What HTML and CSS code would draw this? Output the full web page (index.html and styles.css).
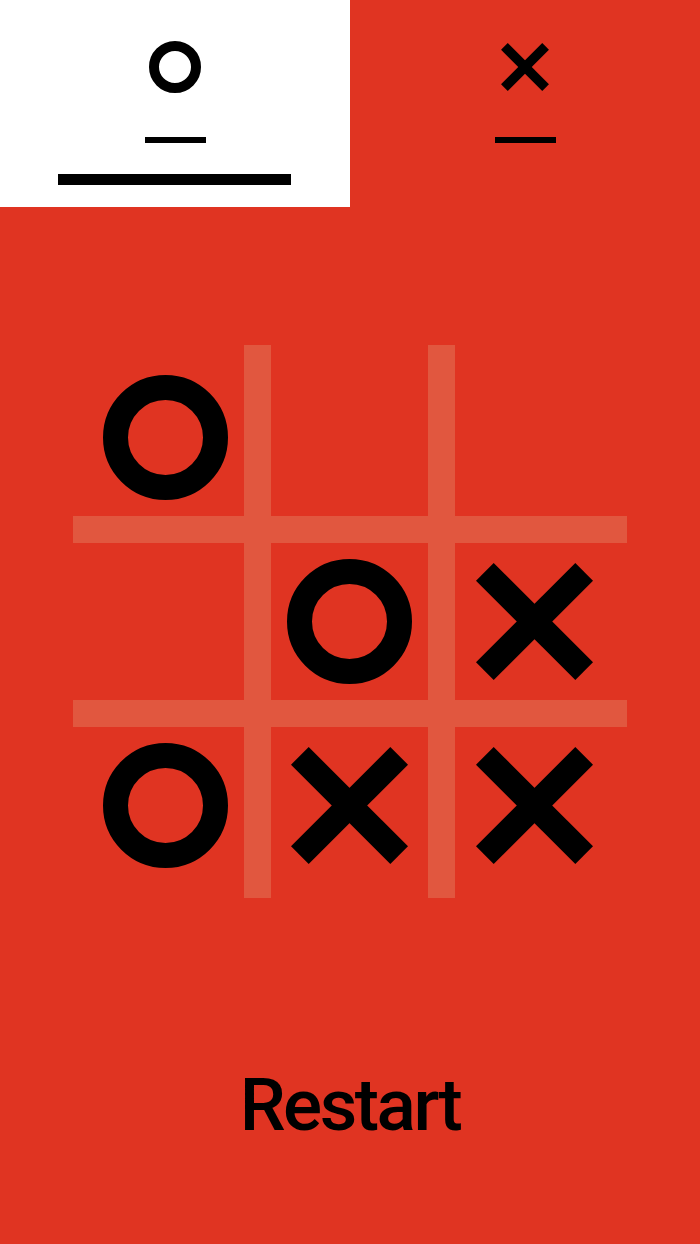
FILE: index.html
```html
<!DOCTYPE html>
<html lang="en">
<head>
<meta charset="utf-8">
<title>Tic Tac Toe</title>
<link rel="stylesheet" href="styles.css">
</head>
<body>
  <header class="players">
    <div class="player player-active">
      <svg class="player-mark" viewBox="0 0 52 52" width="52" height="52">
        <circle cx="26" cy="26" r="21" fill="none" stroke="#000" stroke-width="10"/>
      </svg>
      <div class="player-score"></div>
      <div class="player-turn"></div>
    </div>
    <div class="player">
      <svg class="player-mark" viewBox="0 0 52 52" width="52" height="52">
        <g stroke="#000" stroke-width="9.5">
          <line x1="5.4" y1="5.4" x2="46.6" y2="46.6"/>
          <line x1="46.6" y1="5.4" x2="5.4" y2="46.6"/>
        </g>
      </svg>
      <div class="player-score"></div>
    </div>
  </header>

  <main class="game">
    <div class="board">
      <div class="cell"><svg class="mark" viewBox="0 0 125 125"><circle cx="62.5" cy="62.5" r="50" fill="none" stroke="#000" stroke-width="25"/></svg></div>
      <div class="cell"></div>
      <div class="cell"></div>

      <div class="cell"></div>
      <div class="cell"><svg class="mark" viewBox="0 0 125 125"><circle cx="62.5" cy="62.5" r="50" fill="none" stroke="#000" stroke-width="25"/></svg></div>
      <div class="cell"><svg class="mark mark-x" viewBox="0 0 117 117"><g stroke="#000" stroke-width="25"><line x1="8.84" y1="8.84" x2="108.16" y2="108.16"/><line x1="108.16" y1="8.84" x2="8.84" y2="108.16"/></g></svg></div>

      <div class="cell"><svg class="mark" viewBox="0 0 125 125"><circle cx="62.5" cy="62.5" r="50" fill="none" stroke="#000" stroke-width="25"/></svg></div>
      <div class="cell"><svg class="mark mark-x" viewBox="0 0 117 117"><g stroke="#000" stroke-width="25"><line x1="8.84" y1="8.84" x2="108.16" y2="108.16"/><line x1="108.16" y1="8.84" x2="8.84" y2="108.16"/></g></svg></div>
      <div class="cell"><svg class="mark mark-x" viewBox="0 0 117 117"><g stroke="#000" stroke-width="25"><line x1="8.84" y1="8.84" x2="108.16" y2="108.16"/><line x1="108.16" y1="8.84" x2="8.84" y2="108.16"/></g></svg></div>
    </div>

    <button class="restart" type="button">Restart</button>
  </main>
</body>
</html>
```

FILE: styles.css
```css
html, body {
  margin: 0;
  padding: 0;
}

body {
  background: #e03422;
  min-height: 1244px;
  font-family: Roboto, "Liberation Sans", sans-serif;
  color: #000;
}

/* Player strip */
.players {
  display: flex;
  height: 207px;
}

.player {
  flex: 1;
  display: flex;
  flex-direction: column;
  align-items: center;
  padding-top: 41px;
  box-sizing: border-box;
}

.player-active {
  background: #fff;
}

.player-mark {
  display: block;
}

.player-score {
  width: 61px;
  height: 6px;
  background: #000;
  margin-top: 44px;
}

.player-turn {
  width: 233px;
  height: 11px;
  background: #000;
  margin-top: 31px;
  margin-right: 1px;
}

/* Board */
.game {
  display: flex;
  flex-direction: column;
  align-items: center;
}

.board {
  width: 554px;
  height: 553px;
  margin-top: 138px;
  display: grid;
  grid-template-columns: repeat(3, 1fr);
  grid-template-rows: repeat(3, 1fr);
  background:
    linear-gradient(#e1573f, #e1573f) 171px 0 / 27px 100% no-repeat,
    linear-gradient(#e1573f, #e1573f) 355px 0 / 27px 100% no-repeat,
    linear-gradient(#e1573f, #e1573f) 0 171px / 100% 27px no-repeat,
    linear-gradient(#e1573f, #e1573f) 0 355px / 100% 27px no-repeat;
}

.cell {
  display: flex;
  align-items: center;
  justify-content: center;
}

.mark {
  width: 125px;
  height: 125px;
  display: block;
}

.mark-x {
  width: 117px;
  height: 117px;
}

.restart {
  margin-top: 171px;
  padding: 0;
  border: 0;
  background: none;
  font-family: Roboto, "Liberation Sans", sans-serif;
  font-size: 73px;
  font-weight: 500;
  line-height: 1;
  letter-spacing: -2.5px;
  color: #000;
  cursor: pointer;
}
```
